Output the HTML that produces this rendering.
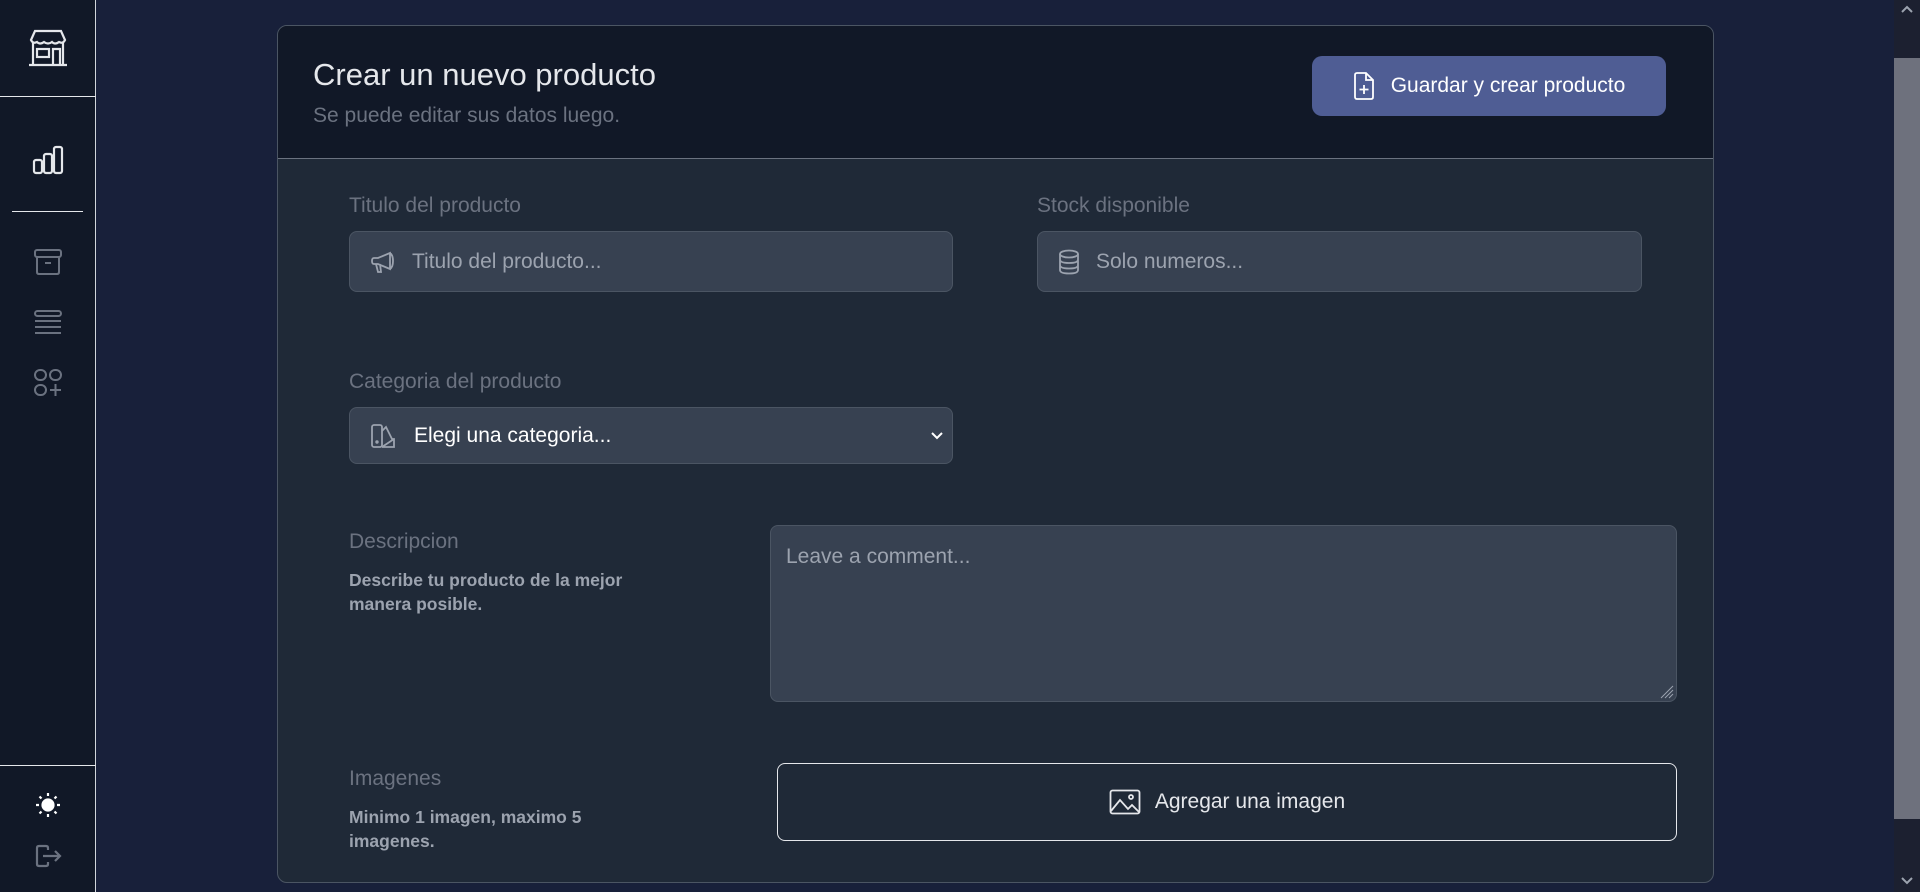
<!DOCTYPE html>
<html><head><meta charset="utf-8"><style>
*{box-sizing:border-box;margin:0;padding:0}
body{width:1920px;height:892px;overflow:hidden;background:#18203a;font-family:"Liberation Sans",sans-serif;position:relative}
.sb{position:absolute;left:0;top:0;width:96px;height:892px;background:#111827;border-right:1px solid #d1d5db}
.hl{position:absolute;height:1px;background:#e5e7eb}
.ic{position:absolute;left:48px;transform:translate(-50%,-50%)}
.card{position:absolute;left:277px;top:25px;width:1437px;height:858px;border:1px solid #4b5563;border-radius:10px;background:#1f2937;overflow:hidden}
.hd{height:133px;background:#111827;border-bottom:1px solid #6b7280;position:relative}
.t{position:absolute;left:35px;top:31px;font-size:31px;color:#e5e7eb}
.st{position:absolute;left:35px;top:78px;font-size:21px;color:#6b7280}
.btn{position:absolute;left:1034px;top:30px;width:354px;height:60px;background:#4f5d94;border-radius:10px;color:#fff;font-size:21px;display:flex;align-items:center;justify-content:center;gap:16px}
.lbl{position:absolute;font-size:21px;color:#6b7280}
.inp{position:absolute;height:61px;background:#374151;border:1px solid #4b5563;border-radius:8px;display:flex;align-items:center;padding-left:20px;gap:16px;font-size:21px;color:#9ca3af}
.sm{position:absolute;font-size:17.5px;font-weight:bold;color:#9ca3af;line-height:24px}
.ta{position:absolute;left:492px;top:499px;width:907px;height:177px;background:#374151;border:1px solid #4b5563;border-radius:8px;padding:19px 15px;font-size:21px;color:#9ca3af}
.ib{position:absolute;left:499px;top:737px;width:900px;height:78px;border:1.5px solid #e5e7eb;border-radius:8px;display:flex;align-items:center;justify-content:center;gap:14px;font-size:21px;color:#e5e7eb}
.scr{position:absolute;left:1894px;top:0;width:26px;height:892px;background:#1c2030}
.th{position:absolute;left:1894px;top:58px;width:26px;height:761px;background:#6e717d}
</style></head><body>
<div class="sb">
<svg class="ic" style="top:48px" width="42" height="40" viewBox="0 0 42 40" fill="none" stroke="#e5e7eb" stroke-width="2.2"><path d="M4 12 L8 3 H34 L38 12 Q36 16 32 14 Q28 17 25 14 Q21 17 17 14 Q13 17 10 14 Q6 16 4 12Z"/><path d="M6 15 V36 M36 15 V36 M2 37 H40"/><rect x="10" y="21" width="12" height="8"/><path d="M26 36 V21 H33 V36"/></svg>
<div class="hl" style="left:0;top:96px;width:96px"></div>
<svg class="ic" style="top:160px" width="32" height="30" viewBox="0 0 32 30" fill="none" stroke="#e5e7eb" stroke-width="2.2"><rect x="2" y="15" width="8" height="13" rx="2"/><rect x="12" y="9" width="8" height="19" rx="2"/><rect x="22" y="2" width="8" height="26" rx="2"/></svg>
<div class="hl" style="left:12px;top:211px;width:71px"></div>
<svg class="ic" style="top:262px" width="30" height="28" viewBox="0 0 30 28" fill="none" stroke="#6b7280" stroke-width="2"><rect x="2" y="2" width="26" height="7" rx="2"/><path d="M4 9 V24 Q4 26 6 26 H24 Q26 26 26 24 V9 M12 15 H18"/></svg>
<svg class="ic" style="top:322px" width="30" height="26" viewBox="0 0 30 26" fill="none" stroke="#6b7280" stroke-width="2"><rect x="2" y="2" width="26" height="5" rx="2.5"/><path d="M2 12 H28 M2 18 H28 M2 24 H28"/></svg>
<svg class="ic" style="top:383px" width="30" height="30" viewBox="0 0 30 30" fill="none" stroke="#6b7280" stroke-width="2"><rect x="2" y="2" width="11" height="10" rx="5"/><rect x="17" y="2" width="11" height="10" rx="5"/><rect x="2" y="17" width="11" height="10" rx="5"/><path d="M22.5 16 V28 M17 22 H28"/></svg>
<div class="hl" style="left:0;top:765px;width:96px"></div>
<svg class="ic" style="top:805px" width="26" height="26" viewBox="0 0 26 26" fill="#fff" stroke="#fff" stroke-width="2.2"><circle cx="13" cy="13" r="5.5"/><path d="M13 1v3M13 22v3M1 13h3M22 13h3M4.5 4.5l2 2M19.5 19.5l2 2M4.5 21.5l2-2M19.5 6.5l2-2"/></svg>
<svg class="ic" style="top:856px" width="28" height="24" viewBox="0 0 28 24" fill="none" stroke="#6b7280" stroke-width="2.2"><path d="M14 6 V4 Q14 2 12 2 H5 Q3 2 3 4 V20 Q3 22 5 22 H12 Q14 22 14 20 V18 M9 12 H26 M21 7 L26 12 L21 17"/></svg>
</div>
<div class="card">
<div class="hd">
<div class="t">Crear un nuevo producto</div>
<div class="st">Se puede editar sus datos luego.</div>
<div class="btn"><svg width="22" height="28" viewBox="0 0 22 28" fill="none" stroke="#fff" stroke-width="1.8"><path d="M2 3 Q2 1 4 1 H13 L20 8 V25 Q20 27 18 27 H4 Q2 27 2 25Z M13 1 V8 H20 M11 13 V22 M6.5 17.5 H15.5"/></svg>Guardar y crear producto</div>
</div>
<div class="lbl" style="left:71px;top:168px">Titulo del producto</div>
<div class="inp" style="left:71px;top:205px;width:604px"><svg width="26" height="24" viewBox="0 0 26 24" fill="none" stroke="#9ca3af" stroke-width="1.8"><path d="M20 3 L8 8 H4 Q2 8 2 11 Q2 14 4 14 H8 L20 19Z M20 3 Q23 5 23 11 Q23 17 20 19 M6 14 L8 22 H11 L10 14"/></svg>Titulo del producto...</div>
<div class="lbl" style="left:759px;top:168px">Stock disponible</div>
<div class="inp" style="left:759px;top:205px;width:605px"><svg width="22" height="26" viewBox="0 0 22 26" fill="none" stroke="#9ca3af" stroke-width="1.8"><ellipse cx="11" cy="5" rx="9" ry="3.5"/><path d="M2 5 V21 Q2 24.5 11 24.5 Q20 24.5 20 21 V5 M2 10.5 Q2 14 11 14 Q20 14 20 10.5 M2 16 Q2 19.5 11 19.5 Q20 19.5 20 16"/></svg>Solo numeros...</div>
<div class="lbl" style="left:71px;top:344px">Categoria del producto</div>
<div class="inp" style="left:71px;top:381px;width:604px;height:57px;color:#fff"><svg width="26" height="26" viewBox="0 0 26 26" fill="none" stroke="#9ca3af" stroke-width="1.8"><rect x="2" y="2" width="10" height="22" rx="2"/><path d="M12 8 L16 4 L22 16 L24 16 V24 H12 M12 24 L24 16"/><circle cx="7" cy="19" r=".8"/></svg><span style="padding-left:2px">Elegi una categoria...</span><svg style="position:absolute;right:8px;top:23px" width="14" height="10" viewBox="0 0 14 10" fill="none" stroke="#fff" stroke-width="2"><path d="M2 2 L7 7 L12 2"/></svg></div>
<div class="lbl" style="left:71px;top:504px">Descripcion</div>
<div class="sm" style="left:71px;top:542px">Describe tu producto de la mejor<br>manera posible.</div>
<div class="ta">Leave a comment...<svg style="position:absolute;right:2px;bottom:2px" width="14" height="14" viewBox="0 0 14 14" stroke="#9ca3af" stroke-width="1"><path d="M13 1 L1 13 M13 5 L5 13 M13 9 L9 13"/></svg></div>
<div class="lbl" style="left:71px;top:741px">Imagenes</div>
<div class="sm" style="left:71px;top:779px">Minimo 1 imagen, maximo 5<br>imagenes.</div>
<div class="ib"><svg width="32" height="26" viewBox="0 0 32 26" fill="none" stroke="#e5e7eb" stroke-width="1.8"><rect x="1.5" y="1.5" width="29" height="23" rx="2"/><path d="M2 22 L11 11 L19 20 L23 16 L30 23"/><circle cx="22" cy="8" r="2"/></svg>Agregar una imagen</div>
</div>
<div class="scr"></div><div class="th"></div>
<svg style="position:absolute;left:1900px;top:4px" width="14" height="10" viewBox="0 0 14 10" fill="none" stroke="#9ca3af" stroke-width="2"><path d="M2 8 L7 3 L12 8"/></svg>
<svg style="position:absolute;left:1900px;top:876px" width="14" height="10" viewBox="0 0 14 10" fill="none" stroke="#9ca3af" stroke-width="2"><path d="M2 2 L7 7 L12 2"/></svg>
</body></html>
